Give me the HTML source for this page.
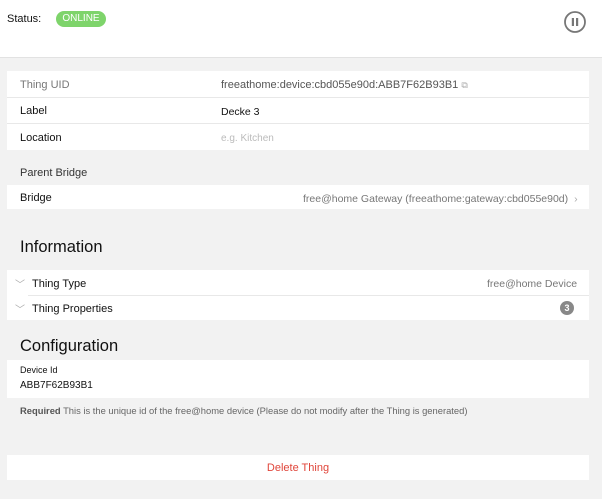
<!DOCTYPE html>
<html><head><meta charset="utf-8"><style>
*{margin:0;padding:0;box-sizing:border-box}
body{width:602px;height:499px;background:#f2f2f2;font-family:"Liberation Sans",sans-serif;font-size:11px;color:#111;position:relative;overflow:hidden}
.a{position:absolute;white-space:nowrap}
.card{position:absolute;left:7px;width:582px;background:#fff}
.hr{position:absolute;height:1px;background:#e8e8e8}
</style></head><body>
<div class="a" style="left:0;top:0;width:602px;height:58px;background:#fff;border-bottom:1px solid #e2e2e2"></div>
<div class="a" style="left:7px;top:13px;font-size:11px">Status:</div>
<div class="a" style="left:56px;top:11px;width:50px;height:16px;border-radius:8px;background:#7ed46b;color:#fff;font-size:10px;line-height:16px;text-align:center">ONLINE</div>
<svg class="a" style="left:563px;top:10px" width="24" height="24" viewBox="0 0 24 24"><circle cx="12" cy="12" r="10" fill="none" stroke="#777" stroke-width="1.8"/><rect x="8.8" y="8" width="2.2" height="8" fill="#777"/><rect x="13" y="8" width="2.2" height="8" fill="#777"/></svg>

<div class="card" style="top:71px;height:79px"></div>
<div class="hr" style="left:7px;width:582px;top:97px"></div>
<div class="hr" style="left:7px;width:582px;top:123px"></div>
<div class="a" style="left:20px;top:79px;color:#777">Thing UID</div>
<div class="a" style="left:221px;top:79px;color:#555">freeathome:device:cbd055e90d:ABB7F62B93B1 <span style="color:#aaa;font-size:9px">⧉</span></div>
<div class="a" style="left:20px;top:105px">Label</div>
<div class="a" style="left:221px;top:106px;font-size:10.5px">Decke 3</div>
<div class="a" style="left:20px;top:132px">Location</div>
<div class="a" style="left:221px;top:133px;color:#bbb;font-size:10px">e.g. Kitchen</div>

<div class="a" style="left:20px;top:167px;color:#333">Parent Bridge</div>
<div class="card" style="top:185px;height:24px"></div>
<div class="a" style="left:20px;top:192px">Bridge</div>
<div class="a" style="left:303px;top:193px;color:#777;font-size:10.5px">free@home Gateway (freeathome:gateway:cbd055e90d) <span style="color:#aaa;margin-left:3px">›</span></div>

<div class="a" style="left:20px;top:238px;font-size:16.5px">Information</div>
<div class="card" style="top:270px;height:50px"></div>
<div class="hr" style="left:28px;width:561px;top:295px"></div>
<div class="a" style="left:15px;top:276px;color:#aaa;font-size:10px">﹀</div>
<div class="a" style="left:32px;top:278px">Thing Type</div>
<div class="a" style="left:487px;top:278px;color:#777;font-size:10.5px">free@home Device</div>
<div class="a" style="left:15px;top:301px;color:#aaa;font-size:10px">﹀</div>
<div class="a" style="left:32px;top:303px">Thing Properties</div>
<div class="a" style="left:560px;top:301px;width:14px;height:14px;border-radius:7px;background:#888;color:#fff;font-size:9px;line-height:14px;text-align:center;font-weight:bold">3</div>

<div class="a" style="left:20px;top:337px;font-size:16.5px">Configuration</div>
<div class="card" style="top:360px;height:38px"></div>
<div class="a" style="left:20px;top:365px;font-size:9px">Device Id</div>
<div class="a" style="left:20px;top:380px;font-size:10px">ABB7F62B93B1</div>
<div class="a" style="left:20px;top:405px;font-size:9.4px;color:#666"><b style="color:#555">Required</b> This is the unique id of the free@home device (Please do not modify after the Thing is generated)</div>

<div class="card" style="top:455px;height:25px"></div>
<div class="a" style="left:0;width:596px;top:462px;text-align:center;color:#e0453a">Delete Thing</div>
</body></html>
